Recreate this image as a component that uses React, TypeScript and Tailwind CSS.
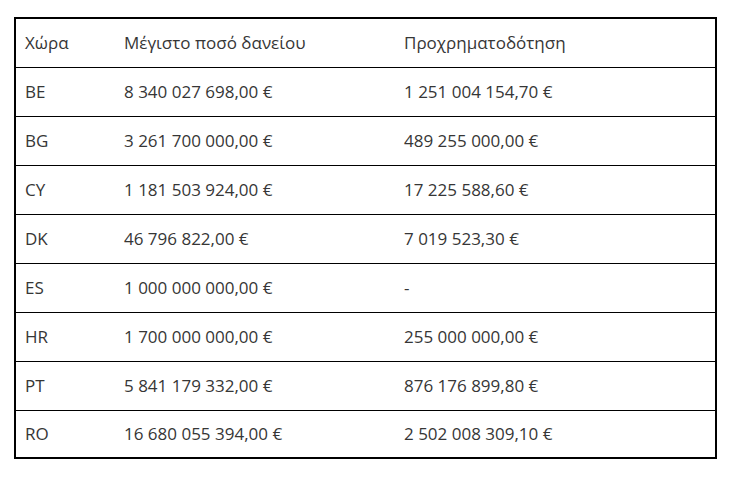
import React from 'react';

const rows: [string, string, string][] = [
  ['BE', '8 340 027 698,00 €', '1 251 004 154,70 €'],
  ['BG', '3 261 700 000,00 €', '489 255 000,00 €'],
  ['CY', '1 181 503 924,00 €', '17 225 588,60 €'],
  ['DK', '46 796 822,00 €', '7 019 523,30 €'],
  ['ES', '1 000 000 000,00 €', '-'],
  ['HR', '1 700 000 000,00 €', '255 000 000,00 €'],
  ['PT', '5 841 179 332,00 €', '876 176 899,80 €'],
  ['RO', '16 680 055 394,00 €', '2 502 008 309,10 €'],
];

export default function App() {
  return (
    <div className="w-[737px] h-[478px] bg-white pt-[17px] pl-[14px] font-['Open_Sans','Liberation_Sans',sans-serif] text-[17px] text-[#363636]">
      <table className="w-[703px] border-2 border-black border-collapse">
        <thead>
          <tr className="h-[49px] border-b border-black">
            <th className="w-[100px] pl-[9px] text-left font-normal">Χώρα</th>
            <th className="w-[280px] pl-[9px] text-left font-normal">Μέγιστο ποσό δανείου</th>
            <th className="pl-[9px] text-left font-normal">Προχρηματοδότηση</th>
          </tr>
        </thead>
        <tbody>
          {rows.map(([c, a, b], i) => (
            <tr key={c} className={i < rows.length - 1 ? 'h-[49px] border-b border-black' : 'h-[48px]'}>
              <td className="pl-[9px]">{c}</td>
              <td className="pl-[9px]">{a}</td>
              <td className="pl-[9px]">{b}</td>
            </tr>
          ))}
        </tbody>
      </table>
    </div>
  );
}
